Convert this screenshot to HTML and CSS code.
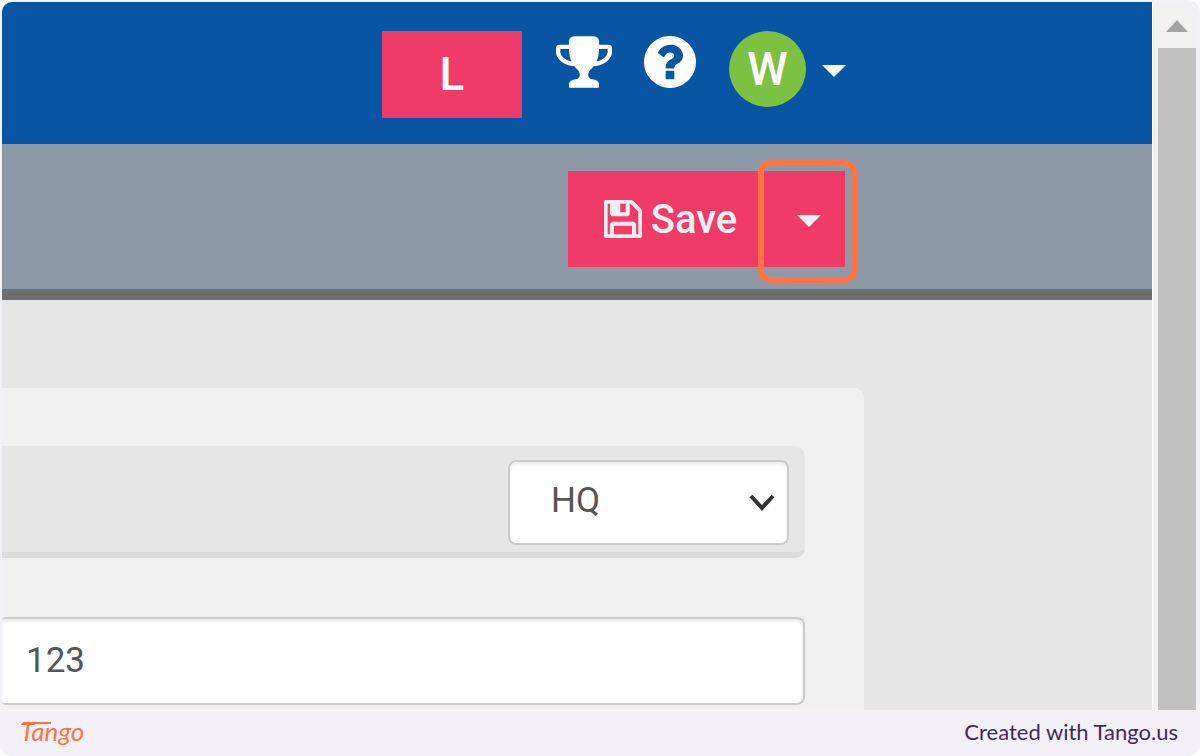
FILE: index.html
```
<!DOCTYPE html>
<html lang="en">
<head>
<meta charset="utf-8">
<title>Tango</title>
<link rel="stylesheet" href="styles.css">
</head>
<body>
<div class="frame">
  <div class="shot">
    <div class="page">
      <header class="topbar">
        <button class="tile" type="button">L</button>
        <button class="icon-button" type="button" aria-label="Achievements">
          <svg class="trophy" viewBox="64 128 1664 1536" aria-hidden="true"><path d="M522 883q-74-162-74-371h-256v96q0 78 94.500 162t235.500 113zm1078-275v-96h-256q0 209-74 371 141-29 235.500-113t94.500-162zm128-128v128q0 71-41.500 143t-112 130-173 97.500-215.500 44.500q-42 54-95 95-38 34-52.500 72.500t-14.500 89.500q0 54 30.500 91t97.500 37q75 0 133.500 45.500t58.500 114.500v64q0 14-9 23t-23 9h-832q-14 0-23-9t-9-23v-64q0-69 58.500-114.500t133.500-45.500q67 0 97.500-37t30.500-91q0-51-14.500-89.500t-52.500-72.500q-53-41-95-95-113-5-215.500-44.500t-173-97.500-112-130-41.500-143v-128q0-40 28-68t68-28h288v-96q0-66 47-113t113-47h576q66 0 113 47t47 113v96h288q40 0 68 28t28 68z"/></svg>
        </button>
        <button class="icon-button" type="button" aria-label="Help">
          <svg class="help" viewBox="128 128 1536 1536" aria-hidden="true"><path d="M1024 1376v-192q0-14-9-23t-23-9h-192q-14 0-23 9t-9 23v192q0 14 9 23t23 9h192q14 0 23-9t9-23zm256-672q0-88-55.500-163t-138.500-116-170-41q-243 0-371 213-15 24 8 42l132 100q7 6 19 6 16 0 25-12 53-68 86-92 34-24 86-24 48 0 85.500 26t37.500 59q0 38-20 61t-68 45q-63 28-115.500 86.500t-52.500 125.500v36q0 14 9 23t23 9h192q14 0 23-9t9-23q0-19 21.500-49.500t54.500-49.500q32-18 49-28.500t46-35 44.500-48 28-60.500 12.500-81zm384 192q0 209-103 385.500t-279.500 279.500-385.500 103-385.500-103-279.500-279.500-103-385.500 103-385.500 279.500-279.500 385.500-103 385.500 103 279.500 279.500 103 385.500z"/></svg>
        </button>
        <button class="account" type="button">
          <span class="avatar">W</span>
          <svg class="caret" viewBox="0 0 24 16" aria-hidden="true"><path d="M0 4H24L12 16Z"/></svg>
        </button>
      </header>
      <div class="toolbar">
        <button class="save" type="button">
          <svg class="floppy" viewBox="128 128 1536 1536" aria-hidden="true"><path d="M512 1536h768v-384h-768v384zm896 0h128v-896q0-14-10-38.500t-20-34.500l-281-281q-10-10-34-20t-39-10v416q0 40-28 68t-68 28h-576q-40 0-68-28t-28-68v-416h-128v1280h128v-416q0-40 28-68t68-28h832q40 0 68 28t28 68v416zm-384-928v-320q0-13-9.500-22.500t-22.500-9.500h-192q-13 0-22.500 9.500t-9.500 22.500v320q0 13 9.500 22.500t22.500 9.500h192q13 0 22.500-9.500t9.500-22.500zm640 32v928q0 40-28 68t-68 28h-1344q-40 0-68-28t-28-68v-1344q0-40 28-68t68-28h928q40 0 88 20t76 48l280 280q28 28 48 76t20 88z"/></svg>
          Save
        </button>
        <button class="more" type="button" aria-label="More save options">
          <svg class="caret" viewBox="0 0 24 16" aria-hidden="true"><path d="M0 4H24L12 16Z"/></svg>
          <span class="highlight"></span>
        </button>
      </div>
      <main class="content">
        <section class="panel">
          <div class="strip">
            <div class="select-wrap">
              <select class="select" aria-label="Location"><option>HQ</option></select>
              <svg class="chevron" viewBox="0 0 28 18" aria-hidden="true"><path d="M3 2L14 14L25 2"/></svg>
            </div>
          </div>
          <input class="field" type="text" value="123" aria-label="Number">
        </section>
      </main>
    </div>
    <div class="scrollbar">
      <svg class="scroll-up" viewBox="0 0 22 12" aria-hidden="true"><path d="M0 12H22L11 0Z"/></svg>
      <div class="thumb"></div>
    </div>
  </div>
  <footer class="footer">
    <span class="brand">Tango</span>
    <span class="credit">Created with Tango.us</span>
  </footer>
</div>
</body>
</html>
```

FILE: styles.css
```
* { box-sizing: border-box; }

body {
  margin: 0;
  background: #fff;
  font-family: Roboto, "Liberation Sans", sans-serif;
}

button {
  border: 0;
  padding: 0;
  background: none;
  color: #fff;
  font-family: inherit;
}

svg {
  display: block;
  flex: none;
  fill: currentColor;
}

.frame {
  display: flex;
  flex-direction: column;
  height: 100vh;
  padding: 2px 2px 0;
  border-radius: 12px;
  background: #f3f1f7;
}

.shot {
  display: flex;
  flex: 1;
  min-height: 0;
  border-radius: 10px 10px 0 0;
  background: #f1f1f1;
  overflow: hidden;
}

.page {
  display: flex;
  flex: 1;
  flex-direction: column;
  background: #e6e6e6;
  overflow: hidden;
}

.topbar {
  display: flex;
  flex: none;
  align-items: flex-start;
  justify-content: flex-end;
  padding: 29px 306px 26px 0;
  background: #0855a3;
}

.tile {
  width: 140px;
  height: 87px;
  padding-bottom: 2px;
  background: #ef3b67;
  font-size: 46px;
  font-weight: 500;
}

.icon-button {
  margin: 5px 0 0 34px;
}

.icon-button + .icon-button {
  margin-left: 32px;
}

.trophy {
  width: 56px;
  height: 52px;
}

.help {
  width: 52px;
  height: 52px;
}

.account {
  display: flex;
  align-items: center;
  gap: 16px;
  margin-left: 33px;
}

.avatar {
  width: 77px;
  height: 76px;
  border-radius: 50%;
  background: #7dc142;
  font-size: 46px;
  font-weight: 500;
  line-height: 76px;
}

.caret {
  width: 24px;
  height: 16px;
}

.toolbar {
  display: flex;
  flex: none;
  padding: 27px 307px 22px 0;
  justify-content: flex-end;
  border-bottom: 11px solid #6e6e6e;
  background: #8d99a6;
}

.save {
  display: flex;
  align-items: center;
  justify-content: center;
  gap: 9px;
  width: 205px;
  height: 96px;
  background: #ef3b67;
  color: #f1f1f1;
  font-size: 40px;
  font-weight: 500;
}

.floppy {
  width: 38px;
  height: 38px;
  stroke: currentColor;
  stroke-width: 36;
}

.more {
  position: relative;
  display: flex;
  align-items: center;
  justify-content: center;
  width: 72px;
  height: 96px;
  background: #ef3b67;
  color: #f1f1f1;
}

.highlight {
  position: absolute;
  inset: -11px -12px -16px -15px;
  border: 6px solid #ff7442;
  border-radius: 12px;
}

.content {
  flex: 1;
  padding: 88px 288px 0 0;
}

.panel {
  height: 100%;
  padding: 58px 59px 0 0;
  border-radius: 0 10px 0 0;
  background: #f1f1f1;
}

.strip {
  display: flex;
  justify-content: flex-end;
  margin-bottom: 59px;
  padding: 14px 16px 7px 0;
  border-bottom: 6px solid #dcdcdc;
  border-radius: 0 10px 10px 0;
  background: #e6e6e6;
}

.select-wrap {
  position: relative;
  width: 281px;
}

.select,
.field {
  display: block;
  width: 100%;
  border: 2px solid #cacaca;
  background: #fff;
  box-shadow: inset 0 3px 3px #eee;
  color: #555;
  font-family: inherit;
  font-size: 35px;
}

.select {
  height: 85px;
  padding: 0 40px 4px 41px;
  border-radius: 8px;
  appearance: none;
}

.chevron {
  position: absolute;
  top: 34px;
  right: 13px;
  width: 28px;
  height: 18px;
  fill: none;
  stroke: #333;
  stroke-width: 4;
}

.field {
  height: 88px;
  padding: 0 24px 2px;
  border-left: 0;
  border-radius: 4px 8px 8px 4px;
}

.scrollbar {
  display: flex;
  flex: none;
  flex-direction: column;
  align-items: center;
  gap: 16px;
  width: 46px;
  padding: 18px 2px 0 5px;
  border-left: 1px solid #fff;
  background: #f1f1f1;
  color: #a3a3a3;
}

.scroll-up {
  width: 22px;
  height: 12px;
}

.thumb {
  flex: 1;
  width: 100%;
  background: #c1c1c1;
}

.footer {
  display: flex;
  flex: none;
  align-items: center;
  justify-content: space-between;
  height: 46px;
  padding: 0 20px 4px 18px;
  font-family: Lato, "Liberation Sans", sans-serif;
}

.brand {
  position: relative;
  color: #ff7442;
  font-size: 26px;
  font-style: italic;
}

.brand::before {
  content: "";
  position: absolute;
  top: 7px;
  left: 3px;
  width: 28px;
  height: 2px;
  background: currentColor;
}

.credit {
  color: #3f2b57;
  font-size: 22px;
}
```
